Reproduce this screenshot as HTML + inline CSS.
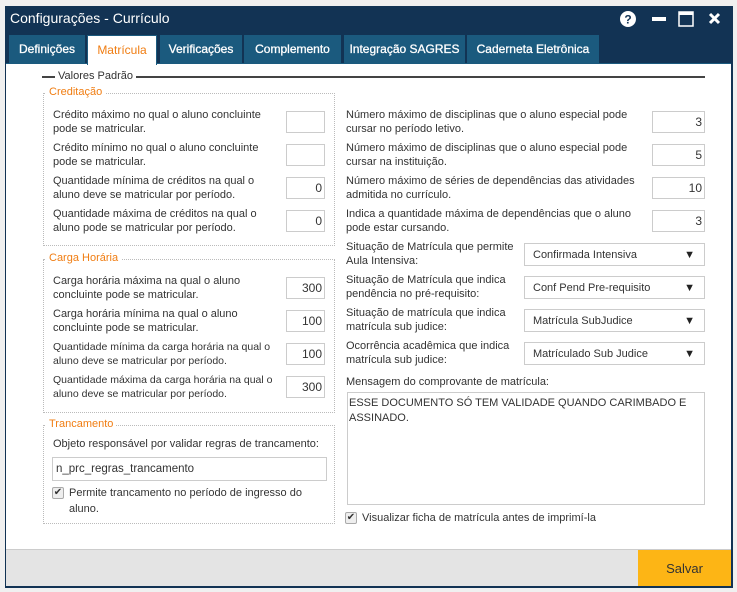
<!DOCTYPE html>
<html><head><meta charset="utf-8"><style>
*{box-sizing:border-box;margin:0;padding:0}
body{width:737px;height:592px;background:#f0f0f0;font-family:"Liberation Sans",sans-serif;font-size:11px;color:#333;position:relative;overflow:hidden}
.a{position:absolute}
.win{left:5px;top:6px;width:728px;height:582px;background:#123354}
.title{left:10px;top:10px;color:#fff;font-size:14px}
.tab{position:absolute;top:35px;height:29px;background:#1b5a7e;color:#fff;font-size:12px;text-align:center;line-height:29px;-webkit-text-stroke:0.3px #fff}
.content{left:6px;top:63px;width:725px;height:486px;background:#fff;border-top:1px solid #1b5a7e}
.footer{left:6px;top:549px;width:725px;height:37px;background:#e4e4e4;border-top:1px solid #ccc}
.fs{position:absolute;border:1px dotted #bbb}
.lg{position:absolute;color:#f07d12;background:#fff;padding:0 3px;font-size:11px}
.lbl{position:absolute;line-height:14px;font-size:11px}
.in{position:absolute;border:1px solid #ccc;background:#fff;text-align:right;padding-right:2px;line-height:20px;font-size:12px}
.sel{position:absolute;border:1px solid #ccc;background:#fff;padding-left:8px;line-height:23px;font-size:11px;width:181px;height:23px}
.sel:after{content:"▼";position:absolute;right:9px;top:0;font-size:11px;color:#222}
.cb{position:absolute;width:12px;height:12px;border:1px solid #aaa;border-radius:2px;background:#eee;font-size:10px;line-height:10px;text-align:center;color:#333}
</style></head><body>
<div class="a win"></div>
<div class="a title">Configurações - Currículo</div>
<svg class="a" style="left:620px;top:9px" width="112" height="20">
<circle cx="8" cy="10" r="8" fill="#fff"/><text x="8" y="14.5" font-size="12" font-weight="bold" text-anchor="middle" fill="#123354" font-family="Liberation Sans">?</text>
<rect x="32" y="8" width="14" height="4" fill="#fff"/>
<rect x="59" y="3" width="14" height="14" fill="none" stroke="#fff" stroke-width="1.5"/><rect x="59" y="3" width="14" height="3" fill="#fff"/>
<path d="M90 5 L99 14 M99 5 L90 14" stroke="#fff" stroke-width="3"/>
</svg>
<div class="a content"></div>
<div class="tab" style="left:9px;width:76px">Definições</div>
<div class="tab" style="left:87px;width:70px;background:#fff;color:#f07d12;height:30px;border:1px solid #1b5a7e;border-bottom:none;line-height:28px;-webkit-text-stroke:0">Matrícula</div>
<div class="tab" style="left:160px;width:82px">Verificações</div>
<div class="tab" style="left:244px;width:97px">Complemento</div>
<div class="tab" style="left:344px;width:121px">Integração SAGRES</div>
<div class="tab" style="left:467px;width:132px">Caderneta Eletrônica</div>

<div class="a" style="left:42px;top:76px;width:663px;height:2px;background:#444"></div>
<div class="a" style="left:55px;top:70px;background:#fff;padding:0 3px;font-size:11px">Valores Padrão</div>

<div class="fs" style="left:43px;top:93px;width:292px;height:153px"></div>
<div class="lg" style="left:46px;top:86px">Creditação</div>
<div class="lbl" style="left:53px;top:108px">Crédito máximo no qual o aluno concluinte<br>pode se matricular.</div>
<div class="in" style="left:286px;top:111px;width:39px;height:22px"></div>
<div class="lbl" style="left:53px;top:141px">Crédito mínimo no qual o aluno concluinte<br>pode se matricular.</div>
<div class="in" style="left:286px;top:144px;width:39px;height:22px"></div>
<div class="lbl" style="left:53px;top:174px">Quantidade mínima de créditos na qual o<br>aluno deve se matricular por período.</div>
<div class="in" style="left:286px;top:177px;width:39px;height:22px">0</div>
<div class="lbl" style="left:53px;top:207px">Quantidade máxima de créditos na qual o<br>aluno pode se matricular por período.</div>
<div class="in" style="left:286px;top:210px;width:39px;height:22px">0</div>

<div class="fs" style="left:43px;top:259px;width:292px;height:154px"></div>
<div class="lg" style="left:46px;top:252px">Carga Horária</div>
<div class="lbl" style="left:53px;top:274px">Carga horária máxima na qual o aluno<br>concluinte pode se matricular.</div>
<div class="in" style="left:286px;top:277px;width:39px;height:22px">300</div>
<div class="lbl" style="left:53px;top:307px">Carga horária mínima na qual o aluno<br>concluinte pode se matricular.</div>
<div class="in" style="left:286px;top:310px;width:39px;height:22px">100</div>
<div class="lbl" style="left:53px;top:340px;font-size:10.5px">Quantidade mínima da carga horária na qual o<br>aluno deve se matricular por período.</div>
<div class="in" style="left:286px;top:343px;width:39px;height:22px">100</div>
<div class="lbl" style="left:53px;top:373px;font-size:10.5px">Quantidade máxima da carga horária na qual o<br>aluno deve se matricular por período.</div>
<div class="in" style="left:286px;top:376px;width:39px;height:22px">300</div>

<div class="fs" style="left:43px;top:425px;width:292px;height:99px"></div>
<div class="lg" style="left:46px;top:418px">Trancamento</div>
<div class="lbl" style="left:53px;top:437px">Objeto responsável por validar regras de trancamento:</div>
<div class="in" style="left:52px;top:457px;width:275px;height:24px;text-align:left;padding-left:3px;font-size:11.5px;line-height:22px">n_prc_regras_trancamento</div>
<div class="cb" style="left:52px;top:487px">✔</div>
<div class="lbl" style="left:69px;top:485px;line-height:16px">Permite trancamento no período de ingresso do<br>aluno.</div>

<div class="lbl" style="left:346px;top:108px">Número máximo de disciplinas que o aluno especial pode<br>cursar no período letivo.</div>
<div class="in" style="left:652px;top:111px;width:53px;height:22px">3</div>
<div class="lbl" style="left:346px;top:141px">Número máximo de disciplinas que o aluno especial pode<br>cursar na instituição.</div>
<div class="in" style="left:652px;top:144px;width:53px;height:22px">5</div>
<div class="lbl" style="left:346px;top:174px">Número máximo de séries de dependências das atividades<br>admitida no currículo.</div>
<div class="in" style="left:652px;top:177px;width:53px;height:22px">10</div>
<div class="lbl" style="left:346px;top:207px">Indica a quantidade máxima de dependências que o aluno<br>pode estar cursando.</div>
<div class="in" style="left:652px;top:210px;width:53px;height:22px">3</div>

<div class="lbl" style="left:346px;top:240px">Situação de Matrícula que permite<br>Aula Intensiva:</div>
<div class="sel" style="left:524px;top:243px">Confirmada Intensiva</div>
<div class="lbl" style="left:346px;top:273px">Situação de Matrícula que indica<br>pendência no pré-requisito:</div>
<div class="sel" style="left:524px;top:276px">Conf Pend Pre-requisito</div>
<div class="lbl" style="left:346px;top:306px">Situação de matrícula que indica<br>matrícula sub judice:</div>
<div class="sel" style="left:524px;top:309px">Matrícula SubJudice</div>
<div class="lbl" style="left:346px;top:339px">Ocorrência acadêmica que indica<br>matrícula sub judice:</div>
<div class="sel" style="left:524px;top:342px">Matrículado Sub Judice</div>

<div class="lbl" style="left:346px;top:375px">Mensagem do comprovante de matrícula:</div>
<div class="a" style="left:347px;top:392px;width:358px;height:113px;border:1px solid #ccc;padding:3px 1px;font-size:11px;line-height:15px">ESSE DOCUMENTO SÓ TEM VALIDADE QUANDO CARIMBADO E<br>ASSINADO.</div>
<div class="cb" style="left:345px;top:512px">✔</div>
<div class="lbl" style="left:362px;top:511px">Visualizar ficha de matrícula antes de imprimí-la</div>

<div class="a footer"></div>
<div class="a" style="left:638px;top:550px;width:93px;height:36px;background:#fdb515;color:#333;font-size:13px;text-align:center;line-height:38px">Salvar</div>
</body></html>
